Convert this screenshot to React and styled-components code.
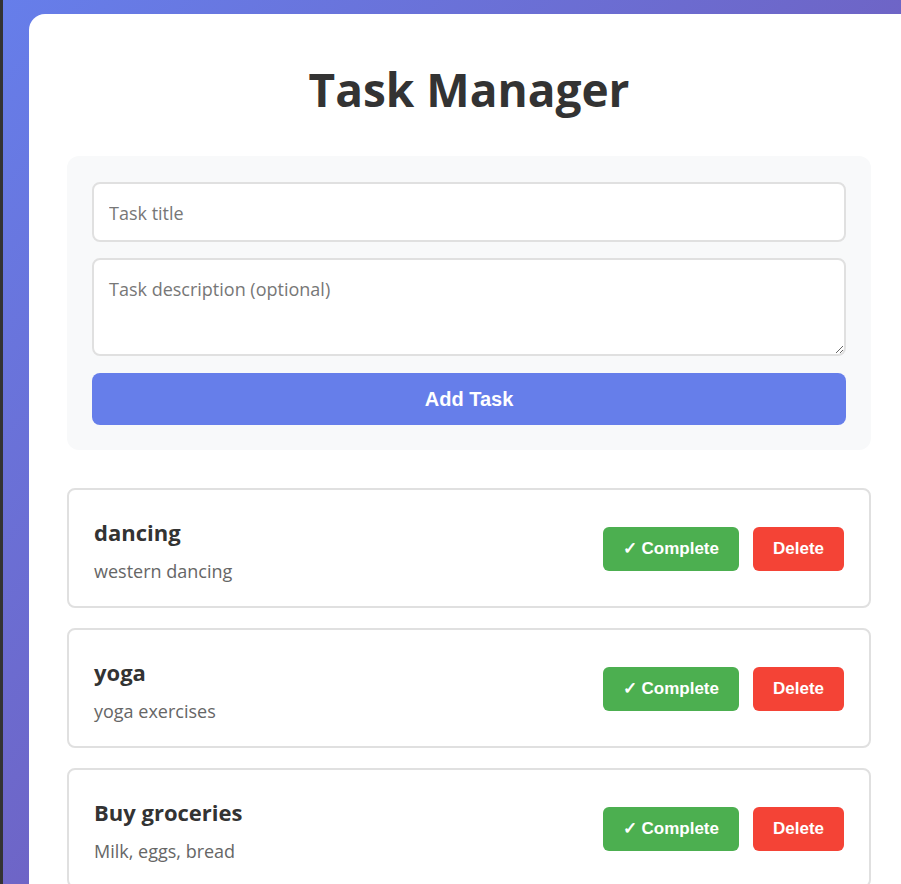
import React from "react";
import styled, { createGlobalStyle } from "styled-components";

const Global = createGlobalStyle`
  html, body { margin: 0; padding: 0; }
  body {
    font-family: "Open Sans", "Noto Sans", sans-serif;
    background: #333;
    overflow: hidden;
  }
`;

const Page = styled.div`
  min-height: 884px;
  margin-left: 3px;
  padding: 14px 0 0 26px;
  box-sizing: border-box;
  background: linear-gradient(135deg, #667eea 0%, #764ba2 100%);
  overflow: hidden;
`;

const Card = styled.div`
  width: 888px;
  box-sizing: border-box;
  background: #fff;
  border-radius: 16px;
  padding: 40px 46px 40px 38px;
  min-height: 900px;
`;

const Title = styled.h1`
  margin: 0 0 32px;
  text-align: center;
  color: #333;
  font-size: 46px;
  font-weight: 700;
  line-height: 70px;
`;

const Form = styled.form`
  background: #f8f9fa;
  border-radius: 12px;
  padding: 26px 25px 25px;
  display: flex;
  flex-direction: column;
  gap: 16px;
  margin-bottom: 38px;
`;

const fieldBase = `
  width: 100%;
  box-sizing: border-box;
  border: 2px solid #e0e0e0;
  border-radius: 8px;
  padding: 0 15px;
  font-family: "Open Sans", "Noto Sans", sans-serif;
  font-size: 18px;
  color: #333;
  background: #fff;
  &::placeholder { color: #777; }
`;

const TextInput = styled.input`
  ${fieldBase}
  height: 60px;
  padding-top: 2px;
`;

const TextArea = styled.textarea`
  ${fieldBase}
  height: 98px;
  padding-top: 17px;
  resize: vertical;
  display: block;
`;

const AddButton = styled.button`
  height: 52px;
  margin-top: 1px;
  border: none;
  border-radius: 8px;
  background: #667eea;
  color: #fff;
  font-family: "Liberation Sans", Arial, sans-serif;
  font-weight: 700;
  font-size: 20px;
`;

const List = styled.div`
  display: flex;
  flex-direction: column;
  gap: 20px;
`;

const Item = styled.div`
  height: 120px;
  box-sizing: border-box;
  border: 2px solid #e0e0e0;
  border-radius: 8px;
  padding: 0 25px;
  display: flex;
  align-items: center;
  justify-content: space-between;
`;

const Info = styled.div`
  display: flex;
  flex-direction: column;
  gap: 12px;
  padding-top: 4px;
`;

const ItemTitle = styled.div`
  font-size: 22px;
  font-weight: 700;
  color: #333;
  line-height: 30px;
`;

const ItemDesc = styled.div`
  font-size: 18px;
  color: #666;
  line-height: 24px;
`;

const Actions = styled.div`
  display: flex;
  gap: 14px;
  padding-top: 1px;
`;

const ActionButton = styled.button`
  height: 44px;
  padding: 0 20px;
  border: none;
  border-radius: 6px;
  color: #fff;
  background: ${(p) => p.$bg};
  font-family: "Liberation Sans", Arial, sans-serif;
  font-weight: 700;
  font-size: 17px;
`;

const tasks = [
  { title: "dancing", desc: "western dancing" },
  { title: "yoga", desc: "yoga exercises" },
  { title: "Buy groceries", desc: "Milk, eggs, bread" },
];

export default function App() {
  return (
    <>
      <Global />
      <Page>
        <Card>
          <Title>Task Manager</Title>
          <Form onSubmit={(e) => e.preventDefault()}>
            <TextInput placeholder="Task title" />
            <TextArea placeholder="Task description (optional)" />
            <AddButton type="submit">Add Task</AddButton>
          </Form>
          <List>
            {tasks.map((t) => (
              <Item key={t.title}>
                <Info>
                  <ItemTitle>{t.title}</ItemTitle>
                  <ItemDesc>{t.desc}</ItemDesc>
                </Info>
                <Actions>
                  <ActionButton $bg="#4caf50">✓ Complete</ActionButton>
                  <ActionButton $bg="#f44336">Delete</ActionButton>
                </Actions>
              </Item>
            ))}
          </List>
        </Card>
      </Page>
    </>
  );
}
